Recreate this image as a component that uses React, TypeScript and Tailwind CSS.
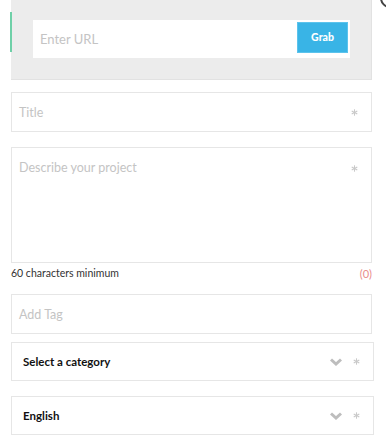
import React from "react";

const Star = () => (
  <svg width="7" height="7" viewBox="0 0 7 7" className="block">
    <g stroke="#c9c9c9" strokeWidth="1.1">
      <line x1="3.5" y1="0.3" x2="3.5" y2="6.7" />
      <line x1="0.7" y1="1.9" x2="6.3" y2="5.1" />
      <line x1="0.7" y1="5.1" x2="6.3" y2="1.9" />
    </g>
  </svg>
);

const Chevron = () => (
  <svg width="12" height="8" viewBox="0 0 12 8" className="block">
    <path d="M1 1.5 L6 6 L11 1.5" fill="none" stroke="#bdbdbd" strokeWidth="3" strokeLinecap="butt" strokeLinejoin="miter" />
  </svg>
);

export default function App() {
  return (
    <div className="relative w-[386px] h-[447px] overflow-hidden bg-white" style={{ fontFamily: "Lato, 'Noto Sans', sans-serif" }}>
      {/* clipped close icon */}
      <div className="absolute right-[-14px] top-[-12px] w-[20px] h-[20px] rounded-full border-[2px] border-[#444] bg-white" />
      <div className="pl-[11px]">
        {/* URL grab panel */}
        <div className="relative w-[361px] h-[80px] bg-[#ececec] border-r border-b border-[#e2e2e2] pt-[20px] pl-[22px]">
          <div className="absolute left-[-1px] top-[12px] w-[2px] h-[40px] bg-[#6fd0a8]" />
          <div className="flex w-[317px] h-[38px] bg-white">
            <div className="flex-1 flex items-center pl-[7px] pt-[2px] text-[13px] text-[#c4c4c4]">Enter URL</div>
            <div className="mt-[2px] mr-[2px] w-[51px] h-[31px] bg-[#39b4e6] border border-[#5cc3ec] flex items-center justify-center text-white text-[10.5px] font-black">
              Grab
            </div>
          </div>
        </div>

        {/* Title */}
        <div className="mt-[12px] w-[361px] h-[40px] border border-[#e6e6e6] flex items-center justify-between pl-[7px] pr-[13px]">
          <span className="pt-[2px] text-[12.5px] text-[#c4c4c4]">Title</span>
          <Star />
        </div>

        {/* Description */}
        <div className="mt-[15px] w-[361px] h-[116px] border border-[#e6e6e6] flex items-start justify-between pl-[7px] pr-[13px] pt-[11px]">
          <span className="text-[12.5px] text-[#c4c4c4]">Describe your project</span>
          <span className="pt-[6px]"><Star /></span>
        </div>
        <div className="w-[361px] flex justify-between items-center h-[22px] text-[10.5px]">
          <span className="text-[#333]">60 characters minimum</span>
          <span className="text-[11px] text-[#e98b8b]">(0)</span>
        </div>

        {/* Tag */}
        <div className="mt-[9px] w-[361px] h-[40px] border border-[#e6e6e6] flex items-center pl-[7px]">
          <span className="pt-[2px] text-[12.5px] text-[#c4c4c4]">Add Tag</span>
        </div>

        {/* Category */}
        <div className="mt-[8px] w-[363px] h-[39px] border border-[#e6e6e6] flex items-center pl-[11px] pr-[13px]">
          <span className="flex-1 text-[11.5px] font-bold text-[#111]">Select a category</span>
          <span className="mr-[11px]"><Chevron /></span>
          <Star />
        </div>

        {/* Language */}
        <div className="mt-[15px] w-[363px] h-[39px] border border-[#e6e6e6] flex items-center pl-[11px] pr-[13px]">
          <span className="flex-1 text-[11.5px] font-bold text-[#111]">English</span>
          <span className="mr-[11px]"><Chevron /></span>
          <Star />
        </div>
      </div>
    </div>
  );
}
